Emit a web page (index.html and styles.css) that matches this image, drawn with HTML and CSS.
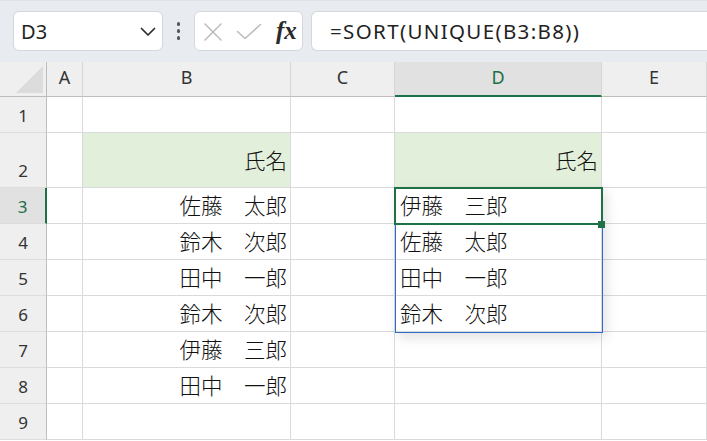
FILE: index.html
```html
<!DOCTYPE html>
<html lang="ja">
<head>
<meta charset="utf-8">
<title>SORT UNIQUE</title>
<link rel="stylesheet" href="styles.css">
</head>
<body>
<div class="app">
  <div class="toolbar">
    <div class="namebox">
      <span class="name">D3</span>
      <svg class="chev" width="16" height="10" viewBox="0 0 16 10"><path d="M1.5 1.5 L8 8 L14.5 1.5" fill="none" stroke="#2b2b2b" stroke-width="1.7" stroke-linecap="round" stroke-linejoin="round"/></svg>
    </div>
    <div class="dots"><i></i><i></i><i></i></div>
    <div class="fxbox">
      <svg class="ico-x" width="20" height="18" viewBox="0 0 20 18"><path d="M2 1 L18 17 M18 1 L2 17" fill="none" stroke="#bdbdbd" stroke-width="1.6" stroke-linecap="round"/></svg>
      <svg class="ico-ok" width="26" height="17" viewBox="0 0 26 17"><path d="M1.5 8.5 L9 15.5 L24.5 1.5" fill="none" stroke="#bdbdbd" stroke-width="1.6" stroke-linecap="round" stroke-linejoin="round"/></svg>
      <span class="fx">fx</span>
    </div>
    <div class="formula">=SORT(UNIQUE(B3:B8))</div>
  </div>

  <div class="sheet">
    <div class="corner"><span class="tri"></span></div>
    <div class="ch">A</div>
    <div class="ch">B</div>
    <div class="ch">C</div>
    <div class="ch ch-sel">D</div>
    <div class="ch">E</div>

    <div class="rh">1</div>
    <div class="c"></div><div class="c"></div><div class="c"></div><div class="c"></div><div class="c"></div>

    <div class="rh">2</div>
    <div class="c"></div><div class="c r fill">氏名</div><div class="c"></div><div class="c r fill">氏名</div><div class="c"></div>

    <div class="rh rh-sel">3</div>
    <div class="c"></div><div class="c r">佐藤　太郎</div><div class="c"></div><div class="c l">伊藤　三郎</div><div class="c"></div>

    <div class="rh">4</div>
    <div class="c"></div><div class="c r">鈴木　次郎</div><div class="c"></div><div class="c l">佐藤　太郎</div><div class="c"></div>

    <div class="rh">5</div>
    <div class="c"></div><div class="c r">田中　一郎</div><div class="c"></div><div class="c l">田中　一郎</div><div class="c"></div>

    <div class="rh">6</div>
    <div class="c"></div><div class="c r">鈴木　次郎</div><div class="c"></div><div class="c l">鈴木　次郎</div><div class="c"></div>

    <div class="rh">7</div>
    <div class="c"></div><div class="c r">伊藤　三郎</div><div class="c"></div><div class="c"></div><div class="c"></div>

    <div class="rh">8</div>
    <div class="c"></div><div class="c r">田中　一郎</div><div class="c"></div><div class="c"></div><div class="c"></div>

    <div class="rh">9</div>
    <div class="c"></div><div class="c"></div><div class="c"></div><div class="c"></div><div class="c"></div>

    <div class="spill"></div>
    <div class="sel"></div>
    <div class="handle"></div>
  </div>
</div>
</body>
</html>
```

FILE: styles.css
```css
html, body {
  margin: 0;
  padding: 0;
  background: #ffffff;
}
body {
  width: 707px;
  height: 441px;
  overflow: hidden;
  font-family: "Noto Sans", "Liberation Sans", sans-serif;
  color: #222;
}
.app {
  width: 707px;
}

/* ---------- toolbar ---------- */
.toolbar {
  height: 62px;
  box-sizing: border-box;
  background: #e8ecf1;
  border-top: 1px solid #dde2e8;
  padding: 10px 0 0 13px;
  display: flex;
  align-items: flex-start;
}
.namebox {
  width: 150px;
  height: 40px;
  box-sizing: border-box;
  background: #fff;
  border: 1px solid #d3d8de;
  border-radius: 6px;
  display: flex;
  align-items: center;
  justify-content: space-between;
  padding: 0 6px 0 7px;
}
.name {
  font-size: 20px;
  color: #222;
  letter-spacing: 0.2px;
}
.chev {
  margin-top: 2px;
}
.dots {
  width: 31px;
  height: 40px;
  display: flex;
  flex-direction: column;
  align-items: center;
  justify-content: center;
  gap: 3.5px;
}
.dots i {
  display: block;
  width: 3.5px;
  height: 3.5px;
  border-radius: 50%;
  background: #555;
}
.fxbox {
  width: 109px;
  height: 40px;
  box-sizing: border-box;
  background: #fff;
  border: 1px solid #d3d8de;
  border-radius: 6px;
  display: flex;
  align-items: center;
  padding-left: 8px;
}
.ico-x {
  margin-top: 1px;
}
.ico-ok {
  margin-left: 13px;
  margin-top: 1px;
}
.fx {
  margin-left: 14px;
  font-family: "Liberation Serif", "DejaVu Serif", serif;
  font-style: italic;
  font-weight: bold;
  font-size: 25px;
  color: #2a2a2a;
  line-height: 1;
  margin-top: -2px;
}
.formula {
  flex: 1;
  margin-left: 8px;
  height: 40px;
  box-sizing: border-box;
  background: #fff;
  border: 1px solid #d3d8de;
  border-right: none;
  border-radius: 6px 0 0 6px;
  padding-left: 18px;
  display: flex;
  align-items: center;
  font-size: 20.5px;
  letter-spacing: 1.35px;
  color: #222;
  white-space: nowrap;
}

/* ---------- sheet ---------- */
.sheet {
  position: relative;
  display: grid;
  grid-template-columns: 47px 36px 208px 104px 207px 105px;
  grid-template-rows: 35px 36px 55px repeat(7, 36px);
}
.corner {
  position: relative;
  background: #efefef;
  border-right: 1px solid #bdbdbd;
  border-bottom: 1px solid #bdbdbd;
  box-sizing: border-box;
}
.tri {
  position: absolute;
  right: 3px;
  bottom: 3px;
  width: 0;
  height: 0;
  border-style: solid;
  border-width: 0 0 27px 27px;
  border-color: transparent transparent #dcdcdc transparent;
}
.ch {
  background: #efefef;
  border-right: 1px solid #d6d6d6;
  border-bottom: 1px solid #bdbdbd;
  box-sizing: border-box;
  display: flex;
  justify-content: center;
  align-items: flex-start;
  padding-top: 3px;
  font-size: 18px;
  color: #333;
}
.ch-sel {
  background: #e1e1e1;
  border-bottom: 2px solid #1e7145;
  color: #1e6e46;
}
.rh {
  background: #efefef;
  border-right: 1px solid #bdbdbd;
  border-bottom: 1px solid #dcdcdc;
  box-sizing: border-box;
  display: flex;
  justify-content: center;
  align-items: flex-end;
  padding-bottom: 5px;
  font-size: 17px;
  color: #333;
}
.rh-sel {
  background: #e1e1e1;
  border-right: 2px solid #1e7145;
  color: #1e6e46;
}
.c {
  border-right: 1px solid #dadada;
  border-bottom: 1px solid #dadada;
  box-sizing: border-box;
  display: flex;
  align-items: center;
  font-family: "Noto Sans CJK JP", "Noto Sans", sans-serif;
  font-weight: 300;
  font-size: 21.5px;
  color: #111;
  white-space: nowrap;
  padding-bottom: 2px;
}
.c.r {
  justify-content: flex-end;
  padding-right: 3px;
}
.c.l {
  justify-content: flex-start;
  padding-left: 5px;
}
.c.fill {
  background: #e2efda;
}

/* ---------- overlays ---------- */
.spill {
  position: absolute;
  left: 395px;
  top: 126px;
  width: 208px;
  height: 145px;
  box-sizing: border-box;
  border: 1px solid #2f6cc9;
  box-shadow: 3px 4px 12px rgba(0, 0, 0, 0.13);
}
.sel {
  position: absolute;
  left: 394px;
  top: 125px;
  width: 209px;
  height: 38px;
  box-sizing: border-box;
  border: 2px solid #1e7145;
}
.handle {
  position: absolute;
  left: 598px;
  top: 159px;
  width: 7px;
  height: 7px;
  background: #1e7145;
}
```
